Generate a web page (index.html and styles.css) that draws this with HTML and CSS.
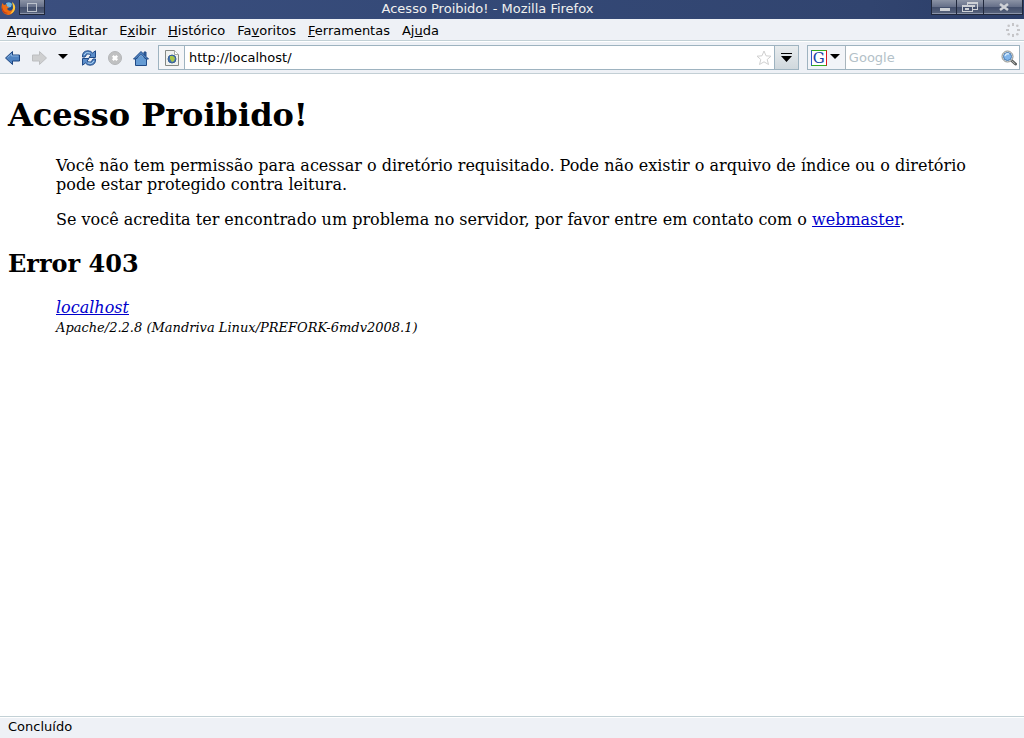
FILE: index.html
```html
<!DOCTYPE html>
<html lang="pt-BR">
<head>
<meta charset="utf-8">
<title>Acesso Proibido!</title>
<link rel="stylesheet" href="styles.css">
</head>
<body>
<div class="window">
  <header class="titlebar">
    <div class="title-left">
      <svg class="firefox" width="16" height="16" viewBox="0 0 16 16" aria-hidden="true">
        <circle cx="8" cy="8" r="6.5" fill="#234a86"/>
        <path d="M5 3q4-2 6 1l-1 3-4 1z" fill="#70b7df"/>
        <path d="M1 3l2 2 3-1-1 2 3 1-2 2q2 3 5 1 2-2 1-6 3 4 1 7-2 4-6 4-5-1-6-5-1-3 0-6z" fill="#ed6b12"/>
        <path d="M11 2q4 3 3 7-1 4-5 5 3-3 3-6 0-3-1-6z" fill="#ffc83a"/>
        <path d="M1 5q0 7 6 8-4 2-6-3z" fill="#c63b16"/>
      </svg>
      <button class="title-button menu-box" aria-label="Menu da janela">
        <svg width="24" height="14" viewBox="0 0 24 14" shape-rendering="crispEdges"><path d="M7.500 3.500h9v8h-9z" fill="none" stroke="#bcc2cc"/></svg>
      </button>
    </div>
    <div class="title">Acesso Proibido! - Mozilla Firefox</div>
    <div class="title-right">
      <button class="title-button" aria-label="Minimizar">
        <svg width="24" height="14" viewBox="0 0 24 14"><path d="M8 8h10v3H8z" fill="#ced1d6"/></svg>
      </button>
      <button class="title-button restore" aria-label="Restaurar">
        <svg width="24" height="14" viewBox="0 0 24 14" shape-rendering="crispEdges"><path d="M9 2h11v8h-5V9h4V4h-9v1H9z" fill="#ced1d6"/><path fill-rule="evenodd" d="M4 5h11v7H4zM5 7v4h9V7z" fill="#ced1d6"/><path d="M7 8h4v2H7zM15 5h2v2h-2z" fill="#ced1d6"/></svg>
      </button>
      <button class="title-button close" aria-label="Fechar">
        <svg width="36" height="14" viewBox="0 0 36 14"><path d="M15 4l8 6M23 4l-8 6" stroke="#ced1d6" stroke-width="2.500"/></svg>
      </button>
    </div>
  </header>

  <nav class="menubar" aria-label="Menu principal">
    <button class="menu-item"><u>A</u>rquivo</button>
    <button class="menu-item"><u>E</u>ditar</button>
    <button class="menu-item">E<u>x</u>ibir</button>
    <button class="menu-item"><u>H</u>istórico</button>
    <button class="menu-item">Fa<u>v</u>oritos</button>
    <button class="menu-item"><u>F</u>erramentas</button>
    <button class="menu-item">Aj<u>u</u>da</button>
    <svg class="throbber" width="16" height="16" viewBox="0 0 16 16" aria-hidden="true">
      <g fill="#c5c5c8"><rect x="7" y="1" width="2" height="3"/><rect x="7" y="12" width="2" height="3"/><rect x="1" y="7" width="3" height="2"/><rect x="12" y="7" width="3" height="2"/><circle cx="3.700" cy="3.700" r="1.300"/><circle cx="12.300" cy="3.700" r="1.300"/><circle cx="3.700" cy="12.300" r="1.300"/><circle cx="12.300" cy="12.300" r="1.300"/></g>
    </svg>
  </nav>

  <div class="toolbar">
    <div class="tools">
      <button class="tool" aria-label="Voltar">
        <svg width="16" height="16" viewBox="0 0 16 16"><path d="M.5 8L7.500 1.500V5h7v6h-7v3.500z" fill="#4f83c1" stroke="#1d4580"/><path d="M2.500 7.500L6.500 4v2h7" fill="none" stroke="#85b0df"/></svg>
      </button>
      <button class="tool" aria-label="Avançar">
        <svg width="16" height="16" viewBox="0 0 16 16"><path d="M15.500 8L8.500 1.500V5h-7v6h7v3.500z" fill="#cecfd0" stroke="#bcbec0"/></svg>
      </button>
      <button class="tool" aria-label="Páginas recentes">
        <svg width="14" height="16" viewBox="0 0 14 16"><path d="M1 4h10L6 9z"/></svg>
      </button>
      <button class="tool" aria-label="Recarregar">
        <svg width="16" height="16" viewBox="0 0 16 16"><g fill="#5b8dc9" stroke="#204a87" stroke-linejoin="round"><path d="M1.500 7Q1 1 7 .8q3 0 4.500 2.200L14.500.8v6.700H8L10 5Q6 2 4 7z"/><path d="M14.500 9q.5 6-5.500 6.200-3 0-4.500-2.200l-3 2.200V8.500H8L6 11q4 3 6-2z"/></g><path d="M3 5q2-4 6-2M13 11q-2 4-6 2" fill="none" stroke="#acd0ed"/></svg>
      </button>
      <button class="tool" aria-label="Parar">
        <svg width="16" height="16" viewBox="0 0 16 16"><circle cx="8" cy="8" r="6.500" fill="#c0c1c2" stroke="#b4b6b8"/><path d="M5.800 5.800l4.400 4.400M10.200 5.800l-4.400 4.400" stroke="#fff" stroke-width="2.400"/></svg>
      </button>
      <button class="tool" aria-label="Página inicial">
        <svg width="16" height="16" viewBox="0 0 16 16"><path d="M11 2h2v4h-2z" fill="#3968a2" stroke="#204a87"/><path d="M2.500 8h11v7.500h-11z" fill="#6b9bd1" stroke="#204a87"/><path d="M.5 9L8 1.500 15.500 9H13L8 4.500 3 9z" fill="#4b80bf" stroke="#204a87"/><path d="M8 5l5 5v5H3v-5z" fill="#659bd3"/></svg>
      </button>
    </div>
    <form class="location">
      <span class="identity">
        <svg width="16" height="16" viewBox="0 0 16 16" aria-hidden="true"><path d="M1.500.5h9l4 4v11h-13z" fill="#f0f1ee" stroke="#858985"/><path d="M10.500.5v4h4" fill="#fff" stroke="#a6aaa6"/><circle cx="8" cy="9" r="4" fill="#4775ae" stroke="#355f95"/><path d="M6 6l3 0 2 2-1 3-2 1-2-3z" fill="#a9c746"/></svg>
      </span>
      <input class="url" type="text" aria-label="Endereço" value="http://localhost/">
      <button class="star" type="button" aria-label="Adicionar aos favoritos">
        <svg width="16" height="16" viewBox="0 0 16 16"><path d="M8 1l2 4.800 5 .4-3.800 3.300 1.300 5L8 11.800l-4.500 2.700 1.300-5L1 6.200l5-.4z" fill="#fff" stroke="#d0d0d0" stroke-linejoin="round"/></svg>
      </button>
      <button class="history" type="button" aria-label="Mostrar histórico">
        <svg width="12" height="12" viewBox="0 0 12 12"><path d="M1 1h11v1H1zM1 4h11L6.500 10z"/></svg>
      </button>
    </form>
    <form class="search">
      <button class="engine" type="button" aria-label="Mecanismo de busca">
        <span class="google-logo">G</span>
        <svg width="10" height="16" viewBox="0 0 10 16"><path d="M0 4h10L5 9z"/></svg>
      </button>
      <input class="query" type="search" aria-label="Pesquisar" placeholder="Google">
      <button class="go" type="button" aria-label="Buscar">
        <svg width="16" height="16" viewBox="0 0 16 16"><path d="M10 10l4.500 4" stroke="#5f6261" stroke-width="3" stroke-linecap="round"/><path d="M11 11l3 2.800" stroke="#b5b7b3"/><circle cx="6.500" cy="6.500" r="5.500" fill="#eee" stroke="#8a8d89"/><circle cx="6.500" cy="6.500" r="4" fill="#81b6ec" stroke="#4779ae"/><path d="M4 6q1-3 4-2" fill="none" stroke="#d3e8fb" stroke-width="1.500"/></svg>
      </button>
    </form>
  </div>

  <main class="page">
    <h1>Acesso Proibido!</h1>
    <div class="message">
      <p>Você não tem permissão para acessar o diretório requisitado. Pode não existir o arquivo de índice ou o diretório pode estar protegido contra leitura.</p>
      <p>Se você acredita ter encontrado um problema no servidor, por favor entre em contato com o <a href="mailto:root@localhost">webmaster</a>.</p>
    </div>
    <h2>Error 403</h2>
    <address class="message">
      <a href="/">localhost</a><br>
      <span class="signature">Apache/2.2.8 (Mandriva Linux/PREFORK-6mdv2008.1)</span>
    </address>
  </main>

  <footer class="statusbar">Concluído</footer>
</div>
</body>
</html>
```
FILE: styles.css
```css
* { box-sizing: border-box; }

body {
  margin: 0;
  background: #fff;
  color: #000;
  font-family: "DejaVu Sans", sans-serif;
  font-size: 13px;
}

svg { display: block; flex: none; }

button {
  margin: 0;
  padding: 0;
  border: 0;
  background: none;
  color: inherit;
  font: inherit;
}

input {
  min-width: 0;
  padding: 0 4px;
  border: 0;
  outline: 0;
  background: none;
  color: inherit;
  font: inherit;
}

.window {
  display: flex;
  flex-direction: column;
  min-height: 100vh;
}

.titlebar {
  display: grid;
  grid-template-columns: 1fr auto 1fr;
  align-items: start;
  height: 19px;
  padding-right: 1px;
  background: linear-gradient(90deg, #3b4f7f, #344977 45%, #31446f 85%, #2b3d68);
  color: #f0f0ee;
}

.title-left,
.title-right { display: flex; }

.title-left { padding-left: 1px; gap: 2px; }
.title-right { justify-content: flex-end; }
.title { padding-right: 48px; line-height: 18px; }

.title-button {
  display: flex;
  justify-content: center;
  width: 26px;
  height: 15px;
  border: 1px solid #20283c;
  border-top: 0;
  background: linear-gradient(#8b93a5, #667089 48%, #424e6b 52%, #59647d);
  box-shadow: inset 0 -1px #8b94a9;
}

.title-button.restore { width: 27px; }
.title-button.close { width: 39px; }
.title-button + .title-button { border-left: 0; }

.menubar {
  display: flex;
  align-items: center;
  gap: 12px;
  height: 22px;
  padding: 0 3px 0 7px;
  border-bottom: 1px solid #c3d1d6;
  background: #eef1f6;
}

.menu-item { padding-top: 2px; line-height: 19px; }
.menu-item u { text-underline-offset: 1px; }
.throbber { margin-left: auto; }

.toolbar {
  display: flex;
  align-items: center;
  gap: 8px;
  height: 33px;
  padding: 0 4px 0 5px;
  border-top: 1px solid #fff;
  border-bottom: 1px solid #c3cfd5;
  background: #eef1f6;
}

.tools { display: flex; gap: 10px; padding-right: 1px; }

.location,
.search {
  display: flex;
  align-items: center;
  min-width: 0;
  height: 25px;
  border: 1px solid #9eb3c0;
  background: #fff;
}

.location { flex: 1; }
.search { flex: 0 0 21%; }

.identity {
  display: flex;
  align-items: center;
  justify-content: center;
  align-self: stretch;
  flex: none;
  width: 26px;
  border-right: 1px solid #9eb3c0;
  background: #f5f6f8;
}

.url { flex: 1; }
.star { margin-right: 2px; }

.history {
  display: flex;
  align-items: center;
  justify-content: center;
  align-self: stretch;
  flex: none;
  width: 24px;
  border-left: 1px solid #9eb3c0;
  background: linear-gradient(#e8ecee, #d0d8dd);
}

.engine {
  display: flex;
  align-items: center;
  align-self: stretch;
  flex: none;
  gap: 3px;
  width: 38px;
  padding-left: 3px;
  border-right: 1px solid #a9b5bd;
  background: #f2f4f8;
}

.google-logo {
  flex: none;
  width: 16px;
  height: 16px;
  border: 1px solid;
  border-color: #33a91f #dd1820 #33a91f #3053c7;
  background: #fff;
  color: #1941a5;
  font: 15px/14px "DejaVu Serif", serif;
  text-align: center;
}

.query { flex: 1; padding: 0 3px; }
.query::placeholder { color: #b3c1c8; opacity: 1; }
.go { margin-right: 2px; }

.page {
  flex: 1;
  padding: 22px 8px;
  font-family: "DejaVu Serif", serif;
  font-size: 16px;
  line-height: 19px;
}

h1 { margin: 0 0 21px; font-size: 32px; line-height: 39px; }
h2 { margin: 21px 0 20px; font-size: 24px; line-height: 28px; }
p { margin: 0 0 16px; }
a { color: #00c; }
.message { margin: 0 16px 0 48px; }
.signature { font-size: 13px; }

.statusbar {
  height: 22px;
  padding: 0 8px;
  border-top: 1px solid #c3d1d6;
  background: #eef1f6;
  box-shadow: inset 0 1px #fff;
  line-height: 20px;
}
```
